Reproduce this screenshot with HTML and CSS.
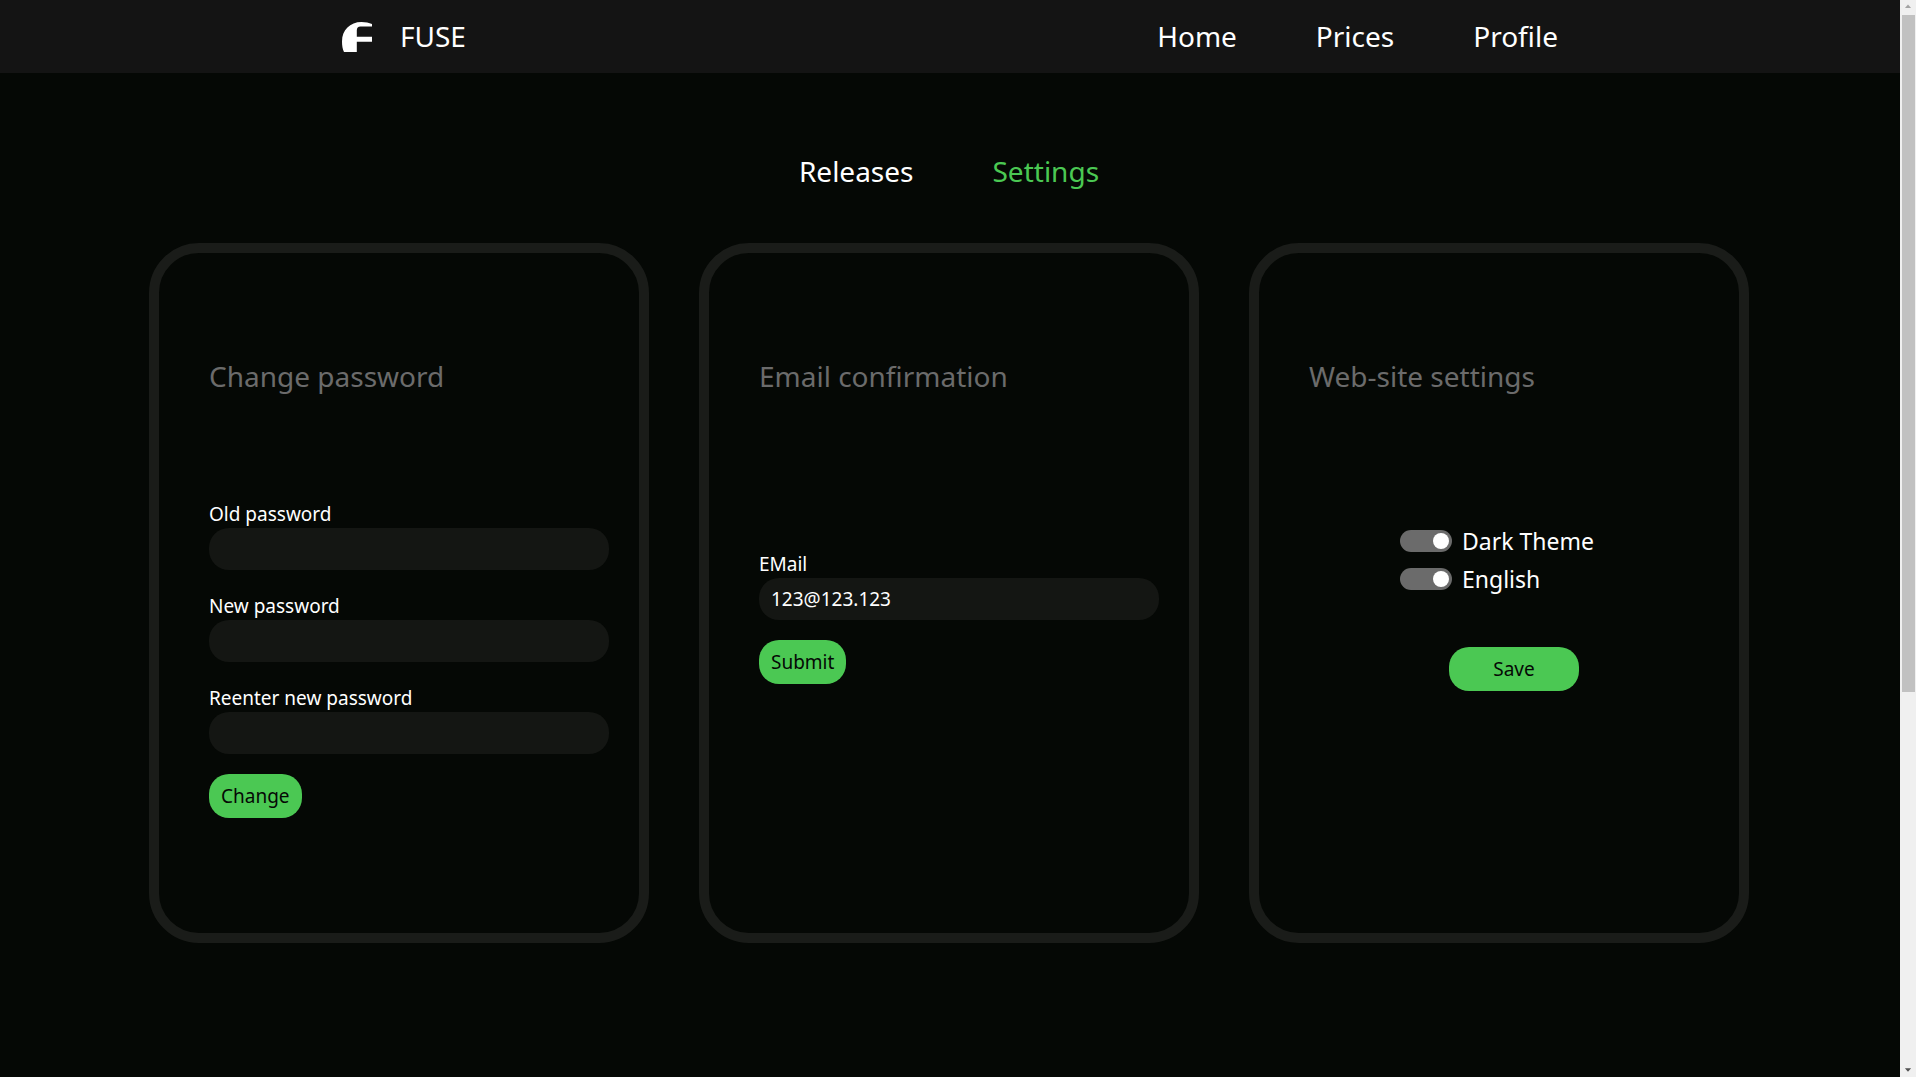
FILE: index.html
```html
<!DOCTYPE html>
<html lang="en">
<head>
  <meta charset="utf-8">
  <meta name="viewport" content="width=device-width, initial-scale=1">
  <title>FUSE</title>
  <link rel="stylesheet" href="styles.css">
</head>
<body>
  <div class="page">
    <header class="header">
      <a class="brand" href="#">
        <svg class="brand-logo" viewBox="0 0 30 30" aria-hidden="true">
          <path fill="#fff" d="M2 30C.6 27 0 23.500 0 19.500 0 8 8 0 19.500 0c4 0 7.500.7 10.500 2v2.500H18.500C16 4.500 14.800 6 14.800 8.500v6.300H30v4.900H14.800V30z"/>
        </svg>
        <span>FUSE</span>
      </a>
      <nav class="nav">
        <a href="#">Home</a>
        <a href="#">Prices</a>
        <a href="#">Profile</a>
      </nav>
    </header>

    <main class="main">
      <nav class="tabs">
        <a href="#">Releases</a>
        <a class="active" href="#">Settings</a>
      </nav>

      <div class="cards">
        <section class="card">
          <h2>Change password</h2>
          <form class="form">
            <div class="field">
              <label for="old">Old password</label>
              <input class="text" id="old" type="password">
            </div>
            <div class="field">
              <label for="new">New password</label>
              <input class="text" id="new" type="password">
            </div>
            <div class="field">
              <label for="again">Reenter new password</label>
              <input class="text" id="again" type="password">
            </div>
            <button class="button" type="button">Change</button>
          </form>
        </section>

        <section class="card">
          <h2>Email confirmation</h2>
          <form class="form form-email">
            <div class="field">
              <label for="email">EMail</label>
              <input class="text" id="email" type="text" value="123@123.123">
            </div>
            <button class="button" type="button">Submit</button>
          </form>
        </section>

        <section class="card">
          <h2>Web-site settings</h2>
          <form class="form form-site">
            <div class="switches">
              <label class="switch"><input type="checkbox" checked>Dark Theme</label>
              <label class="switch"><input type="checkbox" checked>English</label>
            </div>
            <button class="button button-wide" type="button">Save</button>
          </form>
        </section>
      </div>
    </main>
  </div>

  <div class="scrollbar" aria-hidden="true">
    <svg viewBox="0 0 17 17"><path fill="#a3a3a3" d="M5 9h7L8.500 5z"/></svg>
    <div class="track"><div class="thumb"></div></div>
    <svg viewBox="0 0 17 17"><path fill="#505050" d="M5 7h7l-3.500 4z"/></svg>
  </div>
</body>
</html>
```
FILE: styles.css
```css
* {
  box-sizing: border-box;
}

body {
  display: flex;
  margin: 0;
  min-height: 100vh;
  background: #050805;
  color: #fff;
  font-family: "Segoe UI", "Noto Sans", sans-serif;
  font-size: 19px;
}

a {
  color: inherit;
  text-decoration: none;
}

.page {
  flex: 1;
  min-width: 0;
}

.main {
  padding-right: 2px;
}

.header {
  display: flex;
  align-items: center;
  justify-content: space-between;
  padding: 16px 18%;
  background: #141414;
  font-size: 28px;
  line-height: 41px;
}

.brand {
  display: flex;
  align-items: center;
  gap: 28px;
}

.brand-logo {
  width: 30px;
  height: 30px;
}

.nav,
.tabs {
  display: flex;
  gap: 79px;
}

.tabs {
  justify-content: center;
  padding: 78px 0 51px;
  font-size: 28px;
  line-height: 41px;
}

.tabs .active {
  color: #4bc853;
}

.cards {
  display: flex;
  flex-wrap: wrap;
  justify-content: center;
  gap: 50px;
  padding-bottom: 50px;
}

.card {
  width: 500px;
  min-height: 700px;
  padding: 103px 20px 80px 50px;
  border: 10px solid #1a1c19;
  border-radius: 50px;
}

.card h2 {
  margin: 0;
  color: #6b6b6b;
  font-size: 28px;
  font-weight: 400;
  line-height: 41px;
}

.form {
  display: flex;
  flex-direction: column;
  align-items: flex-start;
  gap: 20px;
  margin-top: 103px;
}

.form-email {
  margin-top: 153px;
}

.form-site {
  gap: 49px;
  margin-top: 125px;
}

.field {
  display: flex;
  flex-direction: column;
  width: 400px;
  max-width: 100%;
}

.field label {
  line-height: 28px;
}

.field + .field {
  margin-top: 2px;
}

.text {
  width: 100%;
  height: 42px;
  padding: 0 12px;
  border: 0;
  border-radius: 20px;
  background: #141613;
  color: #fff;
  font: inherit;
}

.button {
  height: 44px;
  padding: 0 12px;
  border: 0;
  border-radius: 20px;
  background: #4bc853;
  color: #050805;
  font: inherit;
}

.button-wide {
  align-self: center;
  width: 130px;
}

.switches {
  padding-left: 91px;
}

.switch {
  display: flex;
  align-items: center;
  gap: 10px;
  font-size: 23px;
  line-height: 38px;
}

.switch input {
  display: flex;
  align-items: center;
  width: 52px;
  height: 22px;
  margin: 0;
  padding: 0 3px;
  border-radius: 11px;
  background: #6b6b6b;
  appearance: none;
}

.switch input::before {
  content: "";
  width: 16px;
  height: 16px;
  border-radius: 50%;
  background: #fff;
}

.switch input:checked {
  justify-content: flex-end;
}

.scrollbar {
  display: flex;
  flex-direction: column;
  flex: none;
  width: 16px;
  background: #f0f0f0;
}

.scrollbar svg {
  width: 16px;
  height: 15px;
}

.track {
  flex: 1;
  padding: 0 1px 0 2px;
}

.thumb {
  height: 64.7%;
  background: #c1c1c1;
}
```
